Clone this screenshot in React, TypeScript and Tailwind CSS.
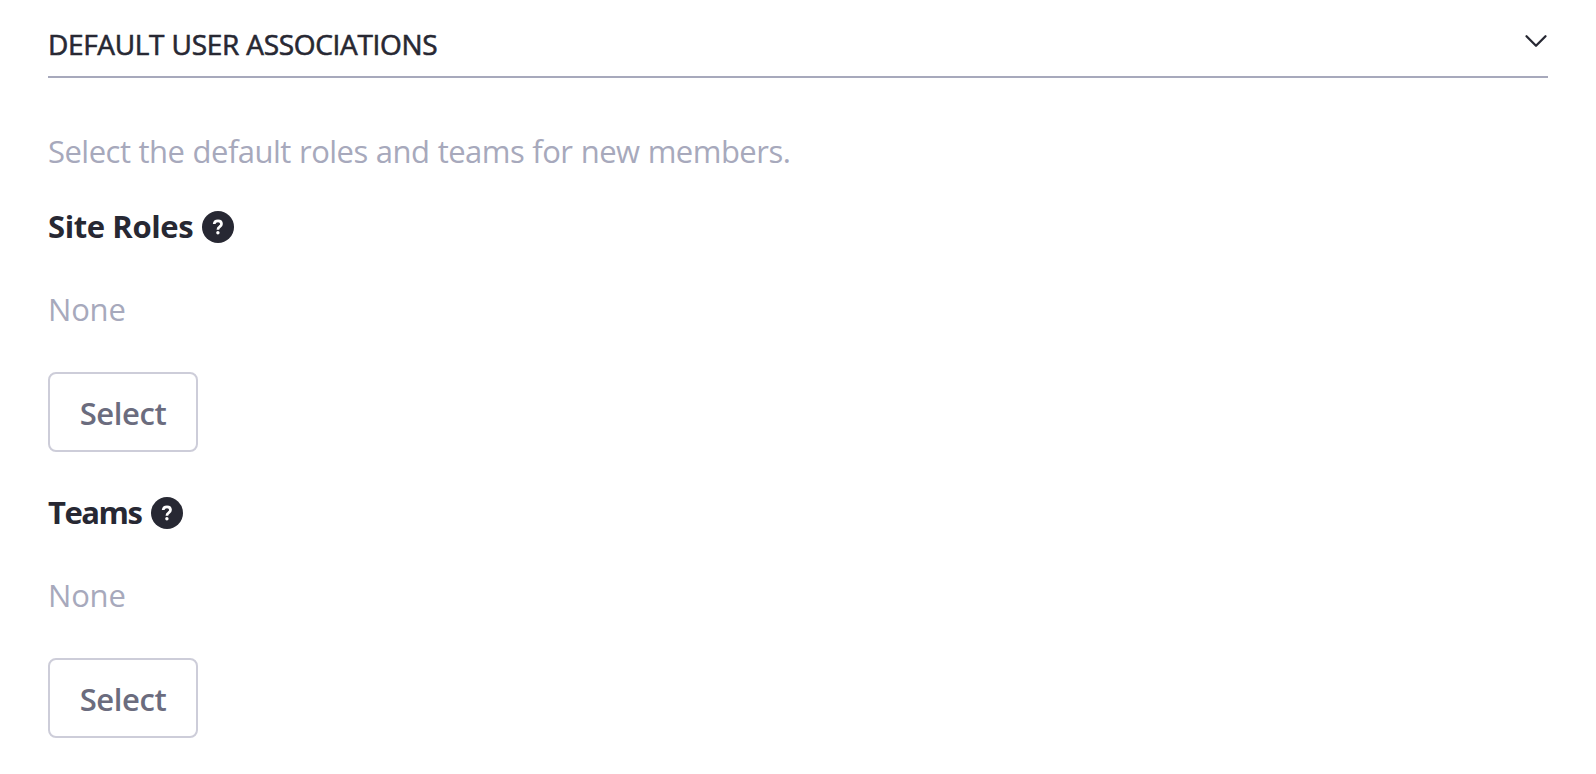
import React from "react";

function HelpIcon() {
  return (
    <svg className="size-8 shrink-0" viewBox="0 0 32 32" fill="none" aria-hidden="true">
      <circle cx="16" cy="16" r="16" fill="#272833" />
      <path
        d="M12.2 13C12.4 10.8 13.9 9.9 16 9.9C18.2 9.9 19.5 11.1 19.5 12.9C19.5 14.4 18.6 15 17.6 15.8C16.4 16.6 15.9 17.2 15.9 18.7"
        stroke="#fff"
        strokeWidth="2.7"
      />
      <circle cx="15.9" cy="21.7" r="1.7" fill="#fff" />
    </svg>
  );
}

type AssociationProps = { label: string; labelClass: string; className: string };

function Association({ label, labelClass, className }: AssociationProps) {
  return (
    <section className={className}>
      <div className="flex h-12 items-center">
        <h3 className={`shrink-0 self-start whitespace-nowrap font-bold leading-[46px] text-[#272833] ${labelClass}`}>
          {label}
        </h3>
        <HelpIcon />
      </div>
      <p className="mt-[34px] leading-[48px] tracking-[-0.2px] text-[#a7a9bc]">None</p>
      <button
        type="button"
        className="mt-[39px] flex h-20 w-[150px] items-center justify-center rounded-lg border-2 border-[#cdcdd9] bg-white pt-0.5 font-semibold tracking-[-0.4px] text-[#6b6c7e]"
      >
        Select
      </button>
    </section>
  );
}

export default function App() {
  return (
    <main className="h-[774px] w-[1596px] overflow-hidden bg-white px-12 pt-6 text-[31px] font-['Open_Sans','Noto_Sans',sans-serif]">
      <header className="flex h-[54px] items-start justify-between border-b-2 border-[#a7a9bc] text-[#272833]">
        <h2 className="whitespace-nowrap text-[28px] font-normal leading-[40px] tracking-[-0.33px] [-webkit-text-stroke:0.6px_#272833] [word-spacing:0.5px]">
          DEFAULT USER ASSOCIATIONS
        </h2>
        <svg className="mt-[9px] h-4 w-6" viewBox="0 0 24 16" fill="none" aria-hidden="true">
          <path d="M2.5 3.2L12 12.7L21.5 3.2" stroke="currentColor" strokeWidth="2.3" strokeLinecap="round" strokeLinejoin="round" />
        </svg>
      </header>
      <p className="mt-[49px] whitespace-nowrap leading-[48px] tracking-[-0.52px] text-[#a7a9bc] [word-spacing:0.6px]">
        Select the default roles and teams for new members.
      </p>
      <Association label="Site Roles" labelClass="w-[154px] tracking-[-0.4px]" className="mt-7" />
      <Association label="Teams" labelClass="w-[103px] tracking-[-1.5px]" className="mt-[37px]" />
    </main>
  );
}
